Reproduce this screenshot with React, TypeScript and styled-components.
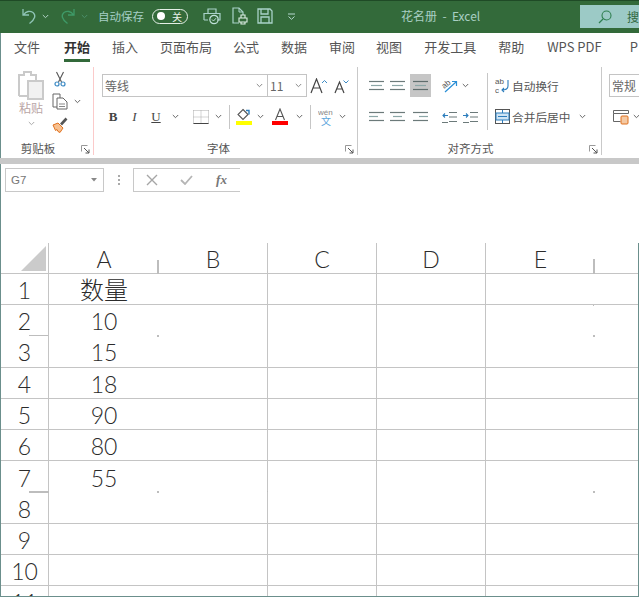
import React, { ReactNode } from "react";
import styled, { createGlobalStyle } from "styled-components";

const GlobalStyle = createGlobalStyle`
  html, body { margin: 0; padding: 0; background: #fff; }
  body { font-family: "Liberation Sans", "Noto Sans CJK SC", sans-serif; }
`;

const cjk = `"Noto Sans CJK SC", "Liberation Sans", sans-serif`;

const Window = styled.div`
  width: 639px;
  height: 597px;
  overflow: hidden;
  display: flex;
  flex-direction: column;
  box-sizing: border-box;
`;

/* ---------- title bar ---------- */
const TitleBar = styled.div`
  height: 33px;
  flex: none;
  background: #336a3a;
  border-top: 1px solid #1f4a26;
  box-sizing: border-box;
  display: flex;
  align-items: center;
  padding: 0 0 2px 20px;
  position: relative;
`;
const QuickSlot = styled.div<{ $w: number; $m?: number }>`
  width: ${(p) => p.$w}px;
  margin-left: ${(p) => p.$m ?? 0}px;
  flex: none;
  display: flex;
  align-items: center;
  justify-content: center;
`;
const AutoSave = styled.span`
  font: 11.5px ${cjk};
  color: #a6cfc6;
  margin: -1px 0 0 10px;
  width: 54px;
  white-space: nowrap;
`;
const Toggle = styled.div`
  width: 36px;
  height: 15px;
  box-sizing: border-box;
  border: 1.5px solid #e4efe6;
  border-radius: 8px;
  display: flex;
  align-items: center;
  justify-content: space-between;
  padding: 0 5px 0 4px;
  color: #e8f0e8;
  font: 10px ${cjk};
`;
const Knob = styled.i`
  width: 8px;
  height: 8px;
  border-radius: 50%;
  background: #fff;
`;
const DocTitle = styled.div`
  margin: -1px 0 0 105px;
  font: 12px ${cjk};
  color: #a9cfc3;
  white-space: pre;
`;
const SearchBox = styled.div`
  margin-left: auto;
  width: 59px;
  height: 23px;
  margin-top: 1px;
  background: #9ccac6;
  display: flex;
  align-items: center;
  padding-left: 18px;
  gap: 15px;
  box-sizing: border-box;
  flex: none;
  overflow: hidden;
  font: 12px ${cjk};
  color: #33693f;
  white-space: nowrap;
  svg {
    flex: none;
  }
`;

/* ---------- tabs ---------- */
const TabBar = styled.div`
  height: 34px;
  flex: none;
  display: flex;
  align-items: flex-start;
  padding: 4px 0 0 13px;
  box-sizing: border-box;
  background: #fff;
  border-left: 1px solid #6b8f8c;
  white-space: nowrap;
  overflow: hidden;
`;
const Tab = styled.div<{ $active?: boolean; $gap: number }>`
  font: ${(p) => (p.$active ? 700 : 400)} 13px/20px ${cjk};
  color: ${(p) => (p.$active ? "#333" : "#555")};
  flex: none;
  height: 25px;
  margin-right: ${(p) => p.$gap}px;
  box-sizing: border-box;
  border-bottom: ${(p) => (p.$active ? "3px solid #33693a" : "none")};
`;

/* ---------- ribbon ---------- */
const Ribbon = styled.div`
  height: 91px;
  flex: none;
  display: flex;
  background: #fff;
  border-left: 1px solid #6b8f8c;
  overflow: hidden;
`;
const Group = styled.div<{ $w: number; $sep?: string }>`
  width: ${(p) => p.$w}px;
  flex: none;
  height: 88px;
  box-sizing: border-box;
  border-right: 1px solid ${(p) => p.$sep ?? "#c9c9c9"};
  display: flex;
  flex-direction: column;
  position: relative;
`;
const GroupBody = styled.div`
  height: 73px;
  display: flex;
  flex: none;
`;
const GroupLabel = styled.div<{ $pr: number }>`
  font: 11.5px/16px ${cjk};
  color: #555;
  text-align: center;
  padding-right: ${(p) => p.$pr}px;
`;
const Launcher = styled.span`
  position: absolute;
  right: 3px;
  bottom: 1px;
  display: flex;
`;
const Stack = styled.div<{ $pt?: number; $gap?: number; $pl?: number; $w?: number }>`
  display: flex;
  flex-direction: column;
  box-sizing: border-box;
  flex: none;
  padding-top: ${(p) => p.$pt ?? 0}px;
  padding-left: ${(p) => p.$pl ?? 0}px;
  gap: ${(p) => p.$gap ?? 0}px;
  ${(p) => (p.$w ? `width: ${p.$w}px;` : "")}
`;
const PasteColumn = styled(Stack)`
  align-items: center;
`;
const Row = styled.div<{ $h?: number }>`
  display: flex;
  align-items: center;
  height: ${(p) => p.$h ?? 23}px;
`;
const Slot = styled.div<{ $w: number; $sel?: boolean }>`
  width: ${(p) => p.$w}px;
  height: 23px;
  flex: none;
  display: flex;
  align-items: center;
  justify-content: center;
  background: ${(p) => (p.$sel ? "#c6c6c6" : "transparent")};
`;
const VSep = styled.div<{ $m?: number; $h?: number; $mt?: number }>`
  width: 1px;
  height: ${(p) => p.$h ?? 24}px;
  background: #c6c6c6;
  flex: none;
  margin: ${(p) => p.$mt ?? 0}px ${(p) => p.$m ?? 0}px 0;
`;
const Combo = styled.div<{ $w: number; $noLeft?: boolean }>`
  width: ${(p) => p.$w}px;
  height: 23px;
  flex: none;
  box-sizing: border-box;
  border: 1px solid #c4c4c4;
  border-left: ${(p) => (p.$noLeft ? "none" : "1px solid #c4c4c4")};
  display: flex;
  align-items: center;
  justify-content: space-between;
  padding: 0 4px 0 2px;
  font: 12px ${cjk};
  color: #666;
  white-space: nowrap;
  overflow: hidden;
`;
const FontStyleBtn = styled.span<{ $kind: "b" | "i" | "u" }>`
  font-family: "Liberation Serif", serif;
  font-size: 13px;
  color: #444;
  font-weight: ${(p) => (p.$kind === "b" ? 700 : 400)};
  font-style: ${(p) => (p.$kind === "i" ? "italic" : "normal")};
  text-decoration: ${(p) => (p.$kind === "u" ? "underline" : "none")};
`;
const PasteLabel = styled.div`
  font: 12px/14px ${cjk};
  color: #b9a5a5;
  text-align: center;
  margin: 1px 0 6px;
`;
const ActionText = styled.span`
  font: 11.7px ${cjk};
  color: #555;
  white-space: nowrap;
  margin-left: 1px;
`;
const Band = styled.div`
  height: 6px;
  flex: none;
  background: #c8c8c8;
`;

/* ---------- formula bar ---------- */
const FormulaBar = styled.div`
  height: 79px;
  flex: none;
  background: #fff;
  display: flex;
  align-items: flex-start;
  padding: 4px 0 0 4px;
  box-sizing: border-box;
  border-left: 1px solid #6b8f8c;
`;
const NameBox = styled.div`
  width: 99px;
  height: 24px;
  box-sizing: border-box;
  border: 1px solid #c8c8c8;
  display: flex;
  align-items: center;
  justify-content: space-between;
  padding: 0 6px 0 5px;
  font: 11.5px "Liberation Sans", sans-serif;
  color: #777;
`;
const Dots = styled.div`
  width: 29px;
  height: 24px;
  display: flex;
  flex-direction: column;
  align-items: center;
  justify-content: center;
  gap: 2px;
  i {
    width: 2px;
    height: 2px;
    background: #aaa;
  }
`;
const FxBox = styled.div`
  width: 107px;
  height: 24px;
  box-sizing: border-box;
  border: 1px solid #c8c8c8;
  border-right: none;
  display: flex;
  align-items: center;
`;
const FxSlot = styled.div`
  width: 35px;
  flex: none;
  display: flex;
  justify-content: center;
  color: #9a9a9a;
`;
const FxText = styled.span`
  font: italic 700 13px "Liberation Serif", serif;
  color: #777;
`;

/* ---------- sheet ---------- */
const Sheet = styled.div`
  flex: 1;
  min-height: 0;
  position: relative;
  display: grid;
  grid-template-columns: 48px 110px 109px 109px 109px 109px 1fr;
  grid-auto-rows: min-content;
  border-left: 1px solid #6b8f8c;
  border-right: 1px solid #6b8f8c;
  border-bottom: 1px solid #6b8f8c;
  overflow: hidden;
  color: #333;
`;
const Cell = styled.div<{ $h: number; $noRight?: boolean; $noBottom?: boolean }>`
  height: ${(p) => p.$h}px;
  box-sizing: border-box;
  padding-top: 2px;
  border-right: ${(p) => (p.$noRight ? "none" : "1px solid #c4c4c4")};
  border-bottom: ${(p) => (p.$noBottom ? "none" : "1px solid #c4c4c4")};
  display: flex;
  align-items: center;
  justify-content: center;
  font: 300 23px "Lato", ${cjk};
  color: #2b2b2b;
  position: relative;
  line-height: 1;
`;
const HeadingText = styled.span`
  font-size: 24px;
  font-weight: 300;
`;
const Corner = styled.div`
  position: absolute;
  right: 2px;
  bottom: 2px;
  width: 0;
  height: 0;
  border-style: solid;
  border-width: 0 0 25px 25px;
  border-color: transparent transparent #cbcbcb transparent;
`;
const Tick = styled.i<{ $x: number; $y: number; $w: number; $h: number }>`
  position: absolute;
  left: ${(p) => p.$x}px;
  top: ${(p) => p.$y}px;
  width: ${(p) => p.$w}px;
  height: ${(p) => p.$h}px;
  background: #bdbdbd;
`;

/* ---------- icons ---------- */
type IconProps = { children: ReactNode; w?: number; h?: number };
const Svg = ({ children, w = 16, h = 16 }: IconProps) => (
  <svg width={w} height={h} viewBox={`0 0 ${w} ${h}`} fill="none" style={{ display: "block" }}>
    {children}
  </svg>
);
const Chevron = ({ color = "#666" }: { color?: string }) => (
  <Svg w={7} h={5}>
    <path d="M.8 1l2.7 2.7L6.2 1" stroke={color} strokeWidth="1" />
  </Svg>
);
const Undo = () => (
  <Svg w={16} h={18}>
    <path d="M2 2v6h6M2.5 8C5 4 9 3.5 12 5.5c3 2.5 2.5 6.5-3.5 11" stroke="#8fc4b6" strokeWidth="1.3" />
  </Svg>
);
const Redo = () => (
  <Svg w={16} h={18}>
    <path d="M14 2v6H8M13.5 8C11 4 7 3.5 4 5.5c-3 2.5-2.5 6.5 3.5 11" stroke="#3f9a68" strokeWidth="1.3" />
  </Svg>
);
const PrintCheck = () => (
  <Svg w={18} h={18}>
    <path d="M5 6V2h8v4M1 13V6.5h16V13h-3M5 13H1" stroke="#a9d2c9" strokeWidth="1.2" />
    <circle cx="11" cy="12.5" r="4.2" stroke="#bfe0d8" strokeWidth="1.2" />
    <path d="M9 12.5l1.5 1.5 2.5-2.8" stroke="#bfe0d8" />
  </Svg>
);
const PrintDoc = () => (
  <Svg w={16} h={18}>
    <path d="M7 16H1V1h6l4 4v3" stroke="#a9d2c9" strokeWidth="1.2" />
    <path d="M7 1v4h4" stroke="#a9d2c9" />
    <path d="M7 11h8v4H7zM9 11V8h4v3M9 15v2h4v-2" stroke="#dfeee6" strokeWidth="1.1" />
  </Svg>
);
const Save = () => (
  <Svg w={16} h={16}>
    <path d="M1 1h12l2 2v12H1zM4 1v5h7V1M4 15V9h8v6" stroke="#a9d2c9" strokeWidth="1.3" />
  </Svg>
);
const Customize = () => (
  <Svg w={9} h={7}>
    <path d="M1 1h7M1.5 3.5l3 2.8 3-2.8" stroke="#b7d8cf" />
  </Svg>
);
const SearchIcon = () => (
  <Svg w={14} h={14}>
    <circle cx="8.5" cy="5.5" r="4.5" stroke="#2f7f50" strokeWidth="1.1" />
    <path d="M5 9l-4 4" stroke="#2f7f50" strokeWidth="1.2" />
  </Svg>
);
const Paste = () => (
  <Svg w={28} h={30}>
    <path d="M2 26V5h5V2h7v3h5v5" stroke="#cacaca" strokeWidth="2" />
    <path d="M2 26h8" stroke="#cacaca" strokeWidth="2" />
    <rect x="11" y="11" width="15" height="18" fill="#f1f1f1" stroke="#cacaca" strokeWidth="2" />
  </Svg>
);
const Scissors = () => (
  <Svg w={12} h={16}>
    <path d="M2.5 1l5 10M9.5 1l-5 10" stroke="#555" strokeWidth="1.1" />
    <circle cx="3" cy="13" r="2" stroke="#3c8ac4" strokeWidth="1.2" />
    <circle cx="9" cy="13" r="2" stroke="#3c8ac4" strokeWidth="1.2" />
  </Svg>
);
const Copy = () => (
  <Svg w={16} h={17}>
    <path d="M1 1h7v13H1z" stroke="#666" />
    <path d="M5 5h6l4 4v7H5z" fill="#fff" stroke="#666" />
    <path d="M7 11h6M7 13.5h6" stroke="#888" />
  </Svg>
);
const Brush = () => (
  <Svg w={16} h={16}>
    <path d="M1 8l5-2 5 5-3 4.500-2-1-1-2-1.500 1z" fill="#f7c08f" stroke="#e0711f" />
    <path d="M9 7.500l5.500-6" stroke="#555" strokeWidth="2.600" />
  </Svg>
);
const Launch = () => (
  <Svg w={9} h={9}>
    <path d="M.5 6.500v-6h6" stroke="#999" />
    <path d="M3 3l5 5M8 4.500V8H4.500" stroke="#555" />
  </Svg>
);
const GrowFont = ({ up }: { up: boolean }) => (
  <Svg w={up ? 18 : 15} h={16}>
    <path d={up ? "M1 15L6.500 1 12 15M3 10h7" : "M1 15L5.500 4 10 15M2.800 11h5.400"} stroke="#444" strokeWidth="1.200" />
    <path d={up ? "M12 5l2.500-2.500L17 5" : "M9.500 2.500L12 5l2.500-2.500"} stroke="#3c8ac4" />
  </Svg>
);
const BorderIcon = () => (
  <Svg w={16} h={16}>
    <path d="M.5 1.500h15M.5 8h15M8 1.500v13M.5 1.500v13M15.500 1.500v13" stroke="#aaa" strokeDasharray="1 1" />
    <path d="M.5 14.500h15" stroke="#444" />
  </Svg>
);
const FillColor = () => (
  <Svg w={16} h={17}>
    <path d="M7 1.500l5 5-5 5-5-5z" stroke="#555" strokeWidth="1.100" />
    <path d="M10 2.500h3v4" stroke="#2b7cbc" strokeWidth="1.400" />
    <rect y="13" width="16" height="4" fill="#ffff00" />
  </Svg>
);
const FontColor = () => (
  <Svg w={16} h={17}>
    <path d="M3.500 12L8 1l4.500 11M5 8.500h6" stroke="#555" strokeWidth="1.100" />
    <rect y="13" width="16" height="4" fill="#ff0000" />
  </Svg>
);
const Phonetic = () => (
  <Svg w={16} h={18}>
    <text x="0" y="7" fontFamily="Liberation Sans" fontSize="8" fill="#888">wén</text>
    <text x="3" y="17" fontFamily="Noto Sans CJK SC" fontSize="10" fill="#5aa5dc">文</text>
  </Svg>
);
const Lines = ({ widths, sel }: { widths: [number, number][]; sel?: boolean }) => (
  <Svg w={15} h={14}>
    {widths.map(([x, w], i) => (
      <path key={i} d={`M${x} ${2.5 + i * 4}h${w}`} stroke={i === 1 ? "#8ba7a7" : sel ? "#5f6d6d" : "#6c7a7a"} strokeWidth="1.2" />
    ))}
  </Svg>
);
const Orient = () => (
  <Svg w={17} h={15}>
    <text x="1" y="9" fontFamily="Liberation Sans" fontSize="8" fill="#555" transform="rotate(-40 5 7)">ab</text>
    <path d="M4 14L15 4M11 3.500h4.500V8" stroke="#2b8fd6" strokeWidth="1.200" />
  </Svg>
);
const Indent = ({ out }: { out: boolean }) => (
  <Svg w={15} h={14}>
    <path d="M7 2.500h8M7 7h8M7 11.500h8M0 12.500h6" stroke="#6c7a7a" strokeWidth="1.100" />
    <path d={out ? "M6 5.500H1M3 3.500L1 5.500l2 2" : "M0 5.500h5M3 3.500l2 2-2 2"} stroke="#2b7cbc" strokeWidth="1.100" />
  </Svg>
);
const Wrap = () => (
  <Svg w={15} h={17}>
    <text x="0" y="7" fontFamily="Liberation Sans" fontSize="8" fill="#555">ab</text>
    <text x="0" y="16" fontFamily="Liberation Sans" fontSize="8" fill="#555">c</text>
    <path d="M13 3v6c0 3-2 4-6 4M9 11l-2 2 2 2" stroke="#2b7cbc" strokeWidth="1.100" />
  </Svg>
);
const Merge = () => (
  <Svg w={15} h={15}>
    <rect x=".5" y=".5" width="14" height="14" stroke="#555" />
    <rect x="1" y="4" width="13" height="7" fill="#cfe4f4" stroke="#2b7cbc" />
    <path d="M3 7.500h9M7.500 1v3M7.500 11v3" stroke="#2b7cbc" />
  </Svg>
);
const NumFormat = () => (
  <Svg w={16} h={16}>
    <path d="M.5 1.500h15v3h-15zM.5 4.500v8h7" stroke="#666" />
    <rect x="8" y="7" width="7" height="8" rx="1" fill="#f4c9a3" stroke="#e0711f" />
  </Svg>
);
const XMark = () => (
  <Svg w={12} h={12}>
    <path d="M1 1l10 10M11 1L1 11" stroke="#a6a6a6" strokeWidth="1.400" />
  </Svg>
);
const CheckMark = () => (
  <Svg w={13} h={10}>
    <path d="M1 5l4 4 7-8" stroke="#b5b5b5" strokeWidth="1.800" />
  </Svg>
);
const Caret = () => (
  <Svg w={6} h={4}>
    <path d="M0 0h6L3 3.500z" fill="#888" />
  </Svg>
);

/* ---------- data ---------- */
const tabs: [string, number][] = [
  ["文件", 24], ["开始", 22], ["插入", 22], ["页面布局", 21], ["公式", 22], ["数据", 22], ["审阅", 21],
  ["视图", 22], ["开发工具", 22], ["帮助", 23], ["WPS PDF", 28], ["P", 0],
];
const colLabels = ["A", "B", "C", "D", "E", ""];
const rowHeights = [31, 31, 32, 31, 31, 31, 32, 31, 31, 31, 31];
const values: Record<number, string> = { 2: "10", 3: "15", 4: "18", 5: "90", 6: "80", 7: "55" };
// the row lines and column lines that are broken in the capture
const brokenRows = [1, 6];
const brokenCols = [0, 4];

const sheetTop = 243;
const ticks = [
  [157, 260 - sheetTop, 2, 14],
  [593, 259 - sheetTop, 2, 15],
  [29, 335 - sheetTop, 19, 1],
  [157, 335 - sheetTop, 2, 2],
  [593, 335 - sheetTop, 2, 2],
  [593, 305 - sheetTop, 1, 1],
  [29, 491 - sheetTop, 20, 2],
  [157, 491 - sheetTop, 2, 2],
  [267, 491 - sheetTop, 1, 1],
  [593, 491 - sheetTop, 2, 2],
];

const App = () => (
  <Window>
    <GlobalStyle />
    <TitleBar>
      <QuickSlot $w={18}><Undo /></QuickSlot>
      <QuickSlot $w={8} $m={3}><Chevron color="#b5d4c9" /></QuickSlot>
      <QuickSlot $w={18} $m={10}><Redo /></QuickSlot>
      <QuickSlot $w={8} $m={3}><Chevron color="#4c8f6b" /></QuickSlot>
      <AutoSave>自动保存</AutoSave>
      <Toggle><Knob />关</Toggle>
      <QuickSlot $w={18} $m={15}><PrintCheck /></QuickSlot>
      <QuickSlot $w={16} $m={11}><PrintDoc /></QuickSlot>
      <QuickSlot $w={16} $m={9}><Save /></QuickSlot>
      <QuickSlot $w={9} $m={14}><Customize /></QuickSlot>
      <DocTitle>花名册  -  Excel</DocTitle>
      <SearchBox><SearchIcon />搜索</SearchBox>
    </TitleBar>

    <TabBar>
      {tabs.map(([t, gap]) => (
        <Tab key={t} $gap={gap} $active={t === "开始"}>{t}</Tab>
      ))}
    </TabBar>

    <Ribbon>
      <Group $w={93} $sep="#fbcaca">
        <GroupBody>
          <PasteColumn $pt={3} $pl={9} $w={51}>
            <Paste />
            <PasteLabel>粘贴</PasteLabel>
            <Chevron color="#aaa" />
          </PasteColumn>
          <Stack>
            <Row><Slot $w={16}><Scissors /></Slot></Row>
            <Row><Slot $w={16}><Copy /></Slot><Slot $w={18}><Chevron /></Slot></Row>
            <Row><Slot $w={16}><Brush /></Slot></Row>
          </Stack>
        </GroupBody>
        <GroupLabel $pr={18}>剪贴板</GroupLabel>
        <Launcher><Launch /></Launcher>
      </Group>

      <Group $w={264}>
        <GroupBody>
          <Stack $pt={7} $gap={8} $pl={8}>
            <Row>
              <Combo $w={166}>等线<Chevron color="#888" /></Combo>
              <Combo $w={39} $noLeft>11<Chevron color="#888" /></Combo>
              <Slot $w={24}><GrowFont up /></Slot>
              <Slot $w={20}><GrowFont up={false} /></Slot>
            </Row>
            <Row>
              <Slot $w={22}><FontStyleBtn $kind="b">B</FontStyleBtn></Slot>
              <Slot $w={21}><FontStyleBtn $kind="i">I</FontStyleBtn></Slot>
              <Slot $w={22}><FontStyleBtn $kind="u">U</FontStyleBtn></Slot>
              <Slot $w={16}><Chevron /></Slot>
              <Slot $w={7} />
              <Slot $w={21}><BorderIcon /></Slot>
              <Slot $w={14}><Chevron /></Slot>
              <VSep $m={4} />
              <Slot $w={20}><FillColor /></Slot>
              <Slot $w={13}><Chevron /></Slot>
              <Slot $w={26}><FontColor /></Slot>
              <Slot $w={12}><Chevron /></Slot>
              <VSep $m={5} />
              <Slot $w={20}><Phonetic /></Slot>
              <Slot $w={13}><Chevron /></Slot>
            </Row>
          </Stack>
        </GroupBody>
        <GroupLabel $pr={14}>字体</GroupLabel>
        <Launcher><Launch /></Launcher>
      </Group>

      <Group $w={244}>
        <GroupBody>
          <Stack $pt={7} $gap={8} $pl={8} $w={129}>
            <Row>
              <Slot $w={21}><Lines widths={[[0, 15], [2, 11], [0, 15]]} /></Slot>
              <Slot $w={21}><Lines widths={[[0, 15], [2, 11], [0, 15]]} /></Slot>
              <Slot $w={2} />
              <Slot $w={21} $sel><Lines sel widths={[[0, 15], [2, 11], [0, 15]]} /></Slot>
              <Slot $w={8} />
              <Slot $w={20}><Orient /></Slot>
              <Slot $w={12}><Chevron /></Slot>
            </Row>
            <Row>
              <Slot $w={21}><Lines widths={[[0, 15], [0, 9], [0, 15]]} /></Slot>
              <Slot $w={21}><Lines widths={[[0, 15], [3, 9], [0, 15]]} /></Slot>
              <Slot $w={2} />
              <Slot $w={21}><Lines widths={[[0, 15], [6, 9], [0, 15]]} /></Slot>
              <Slot $w={8} />
              <Slot $w={21}><Indent out /></Slot>
              <Slot $w={21}><Indent out={false} /></Slot>
            </Row>
          </Stack>
          <VSep $h={57} $mt={6} />
          <Stack $pt={7} $gap={8} $pl={5}>
            <Row><Slot $w={18}><Wrap /></Slot><ActionText>自动换行</ActionText></Row>
            <Row>
              <Slot $w={18}><Merge /></Slot>
              <ActionText>合并后居中</ActionText>
              <Slot $w={24}><Chevron /></Slot>
            </Row>
          </Stack>
        </GroupBody>
        <GroupLabel $pr={18}>对齐方式</GroupLabel>
        <Launcher><Launch /></Launcher>
      </Group>

      <Stack $pt={7} $gap={8} $pl={7} $w={60}>
        <Row><Combo $w={60}>常规</Combo></Row>
        <Row><Slot $w={24}><NumFormat /></Slot><Chevron /></Row>
      </Stack>
    </Ribbon>

    <Band />

    <FormulaBar>
      <NameBox>G7<Caret /></NameBox>
      <Dots><i /><i /><i /></Dots>
      <FxBox>
        <FxSlot><XMark /></FxSlot>
        <FxSlot><CheckMark /></FxSlot>
        <FxSlot><FxText>fx</FxText></FxSlot>
      </FxBox>
    </FormulaBar>

    <Sheet>
      <Cell $h={31}><Corner /></Cell>
      {colLabels.map((c, i) => (
        <Cell key={i} $h={31} $noRight={brokenCols.includes(i) || i === 5}>{c}</Cell>
      ))}
      {rowHeights.map((h, r) => (
        <React.Fragment key={r}>
          <Cell $h={h} $noBottom={brokenRows.includes(r)}>{r + 1}</Cell>
          {colLabels.map((_, i) => (
            <Cell key={i} $h={h} $noBottom={brokenRows.includes(r)} $noRight={brokenCols.includes(i) || i === 5}>
              {i === 0 && r === 0 ? <HeadingText>数量</HeadingText> : i === 0 ? values[r + 1] : ""}
            </Cell>
          ))}
        </React.Fragment>
      ))}
      {ticks.map(([x, y, w, h], i) => (
        <Tick key={i} $x={x - 1} $y={y} $w={w} $h={h} />
      ))}
    </Sheet>
  </Window>
);

export default App;
